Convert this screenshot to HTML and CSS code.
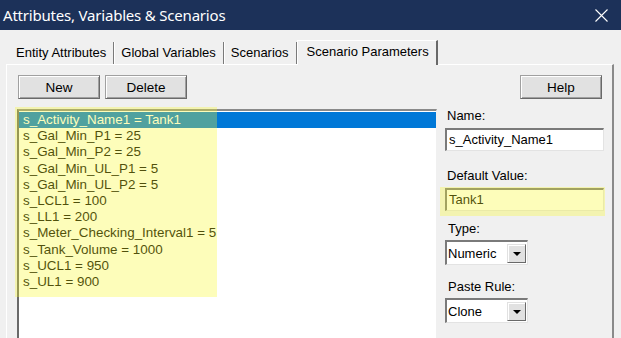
FILE: index.html
```html
<!DOCTYPE html>
<html lang="en">
<head>
	<meta charset="UTF-8">
	<title>Attributes, Variables &amp; Scenarios</title>
	<link rel="stylesheet" href="styles.css">
</head>
<body>
	<div class="titlebar">
		<span class="title">Attributes, Variables &amp; Scenarios</span>
		<svg class="close" width="13" height="13" viewBox="0 0 13 13">
			<path d="M0.5 0.5 L12.5 12.5 M12.5 0.5 L0.5 12.5" stroke="#fff" stroke-width="1.1" fill="none"/>
		</svg>
	</div>

	<div class="tabs">
		<div class="tab">Entity Attributes</div>
		<div class="tab">Global Variables</div>
		<div class="tab">Scenarios</div>
		<div class="tab active">Scenario Parameters</div>
	</div>

	<div class="panel">
		<div class="left">
			<div class="btnrow">
				<button class="btn">New</button>
				<button class="btn">Delete</button>
			</div>
			<div class="listbox">
				<div class="item sel">s_Activity_Name1 = Tank1</div>
				<div class="item">s_Gal_Min_P1 = 25</div>
				<div class="item">s_Gal_Min_P2 = 25</div>
				<div class="item">s_Gal_Min_UL_P1 = 5</div>
				<div class="item">s_Gal_Min_UL_P2 = 5</div>
				<div class="item">s_LCL1 = 100</div>
				<div class="item">s_LL1 = 200</div>
				<div class="item">s_Meter_Checking_Interval1 = 5</div>
				<div class="item">s_Tank_Volume = 1000</div>
				<div class="item">s_UCL1 = 950</div>
				<div class="item">s_UL1 = 900</div>
				<div class="marker list-mark"></div>
			</div>
		</div>

		<div class="right">
			<div class="helprow"><button class="btn">Help</button></div>
			<div class="label name-label">Name:</div>
			<div class="field">s_Activity_Name1</div>
			<div class="label dv-label">Default Value:</div>
			<div class="dv-wrap">
				<div class="field">Tank1</div>
				<div class="marker dv-mark"></div>
			</div>
			<div class="label type-label">Type:</div>
			<div class="combo">
				<span class="combo-text">Numeric</span>
				<span class="combo-btn"><span class="arrow"></span></span>
			</div>
			<div class="label paste-label">Paste Rule:</div>
			<div class="combo">
				<span class="combo-text">Clone</span>
				<span class="combo-btn"><span class="arrow"></span></span>
			</div>
		</div>
	</div>
</body>
</html>
```

FILE: styles.css
```css
*{margin: 0;padding: 0;box-sizing: border-box;}
html,body{width: 621px;height: 338px;overflow: hidden;}
body{
	background: #f0f0f0;
	font-family: "Liberation Sans", Arial, sans-serif;
	font-size: 13px;
	color: #000;
}
.titlebar{
	height: 30px;
	background: #1c3159;
	color: #fff;
	display: flex;
	align-items: center;
	justify-content: space-between;
	padding: 0 13px 0 3px;
}
.title{
	font-family: "Noto Sans", "Open Sans", sans-serif;
	font-size: 15px;
	letter-spacing: -0.2px;
}
.close{display: block;margin-top: 1px;}

/* tab strip */
.tabs{
	display: flex;
	align-items: flex-end;
	height: 34px;
	padding-left: 9px;
}
.tab{
	height: 22px;
	line-height: 21px;
	padding: 0 7px;
	border-right: 1px solid #7a7a7a;
	box-shadow: 1px 0 0 #fff;
	white-space: nowrap;
}
.tab.active{
	position: relative;
	z-index: 1;
	height: 25px;
	line-height: 22px;
	margin-bottom: -1px;
	padding: 0 7px 0 9px;
	background: #f0f0f0;
	border-top: 1px solid #fff;
	border-left: 1px solid #fff;
	border-right: 2px solid #696969;
	box-shadow: none;
}

/* page body */
.panel{
	display: flex;
	margin-left: 6px;
	width: 608px;
	height: 280px;
	border-top: 1px solid #fff;
	border-left: 1px solid #fff;
	border-right: 2px solid #8a8a8a;
	padding: 10px 0 0 10px;
}
.left{width: 420px;}
.btnrow{display: flex;gap: 5px;margin-left: 1px;}
.btn{
	width: 82px;
	height: 24px;
	font-family: "Liberation Sans", Arial, sans-serif;
	font-size: 13.5px;
	background: #e1e1e1;
	border: 1px solid #a0a0a0;
	border-right-color: #696969;
	border-bottom-color: #696969;
	box-shadow: inset 1px 1px 0 #fff, inset -1px -1px 0 #a0a0a0;
	color: #000;
}
.listbox{
	position: relative;
	margin-top: 10px;
	height: 240px;
	background: #fff;
	border-top: 2px solid #8a8a8a;
	border-left: 2px solid #696969;
	border-right: 1px solid #f0f0f0;
	padding-top: 1px;
	font-size: 13.4px;
}
.item{
	height: 16.2px;
	line-height: 16px;
	padding-left: 4px;
	white-space: nowrap;
}
.item.sel{background: #0078d7;color: #fff;}
.marker{
	position: absolute;
	background: rgba(250, 250, 40, 0.32);
	pointer-events: none;
}
.list-mark{left: -4px;top: -4px;width: 202px;height: 190px;}

.right{
	width: 159px;
	margin-left: 8px;
}
.helprow{display: flex;justify-content: flex-end;padding-right: 2px;}
.label{height: 16px;line-height: 16px;padding-left: 2px;}
.name-label{margin-top: 9px;}
.dv-label{margin-top: 17px;}
.type-label{margin-top: 10px;padding-left: 3px;}
.paste-label{margin-top: 14px;padding-left: 3px;}
.field{
	margin-top: 4px;
	height: 23px;
	line-height: 20px;
	padding-left: 2px;
	background: #fff;
	border-top: 2px solid #7a7a7a;
	border-left: 2px solid #7a7a7a;
	border-right: 1px solid #e3e3e3;
	border-bottom: 1px solid #e3e3e3;
	white-space: nowrap;
}
.dv-wrap{position: relative;}
.dv-mark{left: -5px;top: -1px;width: 165px;height: 29px;}
.combo{
	display: flex;
	align-items: center;
	justify-content: space-between;
	margin-top: 3px;
	width: 83px;
	height: 25px;
	background: #fff;
	border-top: 2px solid #7a7a7a;
	border-left: 2px solid #7a7a7a;
	border-right: 1px solid #e3e3e3;
	border-bottom: 1px solid #e3e3e3;
	padding: 0 1px 0 1px;
}
.combo-btn{
	display: flex;
	align-items: center;
	justify-content: center;
	width: 19px;
	height: 19px;
	background: #e1e1e1;
	border: 1px solid #e1e1e1;
	border-right-color: #696969;
	border-bottom-color: #696969;
	box-shadow: inset 1px 1px 0 #fff;
}
.arrow{
	width: 0;
	height: 0;
	border-left: 4px solid transparent;
	border-right: 4px solid transparent;
	border-top: 4px solid #000;
	margin-top: 1px;
}
```
